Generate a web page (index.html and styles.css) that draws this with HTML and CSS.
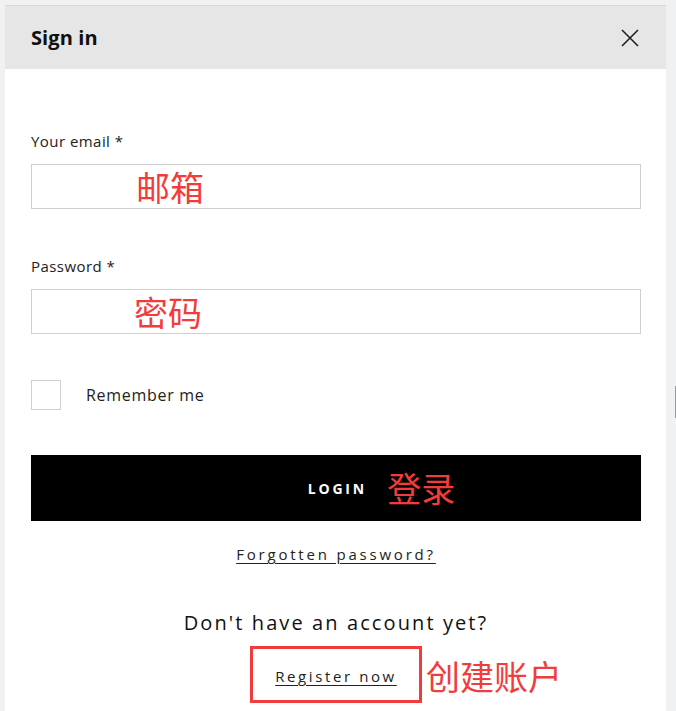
FILE: index.html
```html
<!DOCTYPE html>
<html lang="en">
<head>
<meta charset="utf-8">
<title>Sign in</title>
<link rel="stylesheet" href="styles.css">
</head>
<body>
<div class="modal">
  <div class="header">
    <h1 class="title">Sign in</h1>
    <button class="close" aria-label="Close">
      <svg width="18" height="18" viewBox="0 0 18 18"><path d="M1 1 L17 17 M17 1 L1 17" stroke="#1a1a1a" stroke-width="1.5" fill="none"/></svg>
    </button>
  </div>
  <div class="body">
    <label class="label first">Your email *</label>
    <div class="input"><span class="note">邮箱</span></div>
    <label class="label">Password *</label>
    <div class="input"><span class="note pw">密码</span></div>
    <div class="remember">
      <span class="checkbox"></span>
      <span class="remember-text">Remember me</span>
    </div>
    <div class="login">
      <span></span>
      <span class="login-text">LOGIN</span>
      <span class="note login-note">登录</span>
    </div>
    <div class="center"><a class="link forgot">Forgotten password?</a></div>
    <div class="center question">Don't have an account yet?</div>
    <div class="register-row">
      <span></span>
      <span class="register-box"><a class="link">Register now</a></span>
      <span class="note reg-note">创建账户</span>
    </div>
  </div>
</div>
<div class="scroll-mark"></div>
</body>
</html>
```
FILE: styles.css
```css
html, body {
  margin: 0;
  padding: 0;
  background: #f0f1f2;
  height: 711px;
  overflow: hidden;
}
body {
  font-family: "Open Sans", "Noto Sans CJK SC", sans-serif;
  color: #222;
  padding-top: 5px;
}
.modal {
  margin-left: 5px;
  width: 661px;
  height: 706px;
  background: #fff;
  border-top: 1px solid #dadada;
  box-sizing: border-box;
}
.header {
  height: 63px;
  background: #e6e6e6;
  display: flex;
  align-items: center;
  justify-content: space-between;
  padding: 0 27px 0 26px;
}
.title {
  margin: 0;
  font-size: 20px;
  font-weight: 700;
  color: #111;
  letter-spacing: 0.1px;
  line-height: 26px;
  padding-top: 1px;
}
.close {
  border: 0;
  background: none;
  padding: 0;
  width: 18px;
  height: 18px;
  display: block;
  cursor: pointer;
  margin-top: 1px;
}
.close svg { display: block; }
.body {
  padding: 0 25px 0 26px;
  display: flex;
  flex-direction: column;
}
.label {
  display: block;
  font-size: 15px;
  line-height: 20px;
  letter-spacing: 0.45px;
  color: #222;
  margin-top: 47px;
  margin-bottom: 13px;
}
.label.first { margin-top: 62px; }
.input {
  height: 45px;
  border: 1px solid #cfcfcf;
  box-sizing: border-box;
  display: flex;
  align-items: center;
  padding-left: 104px;
}
.note {
  font-family: "Noto Sans CJK SC", sans-serif;
  color: #f23c3c;
  font-size: 34px;
  line-height: 40px;
}
.note.pw { margin-left: -2px; }
.remember {
  display: flex;
  align-items: center;
  margin-top: 46px;
  height: 30px;
}
.checkbox {
  width: 30px;
  height: 30px;
  border: 1px solid #d0d0d0;
  box-sizing: border-box;
}
.remember-text {
  margin-left: 25px;
  font-size: 16px;
  letter-spacing: 0.7px;
  color: #222;
}
.login {
  margin-top: 45px;
  height: 66px;
  background: #000;
  display: grid;
  grid-template-columns: 1fr auto 1fr;
  align-items: center;
}
.login-text {
  color: #fff;
  font-weight: 700;
  font-size: 14px;
  letter-spacing: 2.8px;
  margin-right: -2.8px;
}
.login-note {
  margin-left: 23px;
  font-size: 34px;
}
.center {
  text-align: center;
}
.link {
  color: #222;
  text-decoration: underline;
  text-underline-offset: 3px;
  font-size: 15px;
  letter-spacing: 2.6px;
  cursor: pointer;
}
.forgot {
  display: inline-block;
  margin-top: 23px;
  line-height: 20px;
  letter-spacing: 2.8px;
}
.question {
  margin-top: 45px;
  font-size: 20px;
  line-height: 26px;
  letter-spacing: 2.1px;
  color: #111;
}
.register-row {
  margin-top: 10px;
  display: grid;
  grid-template-columns: 1fr auto 1fr;
  align-items: center;
}
.register-box {
  border: 3px solid #f23c3c;
  box-sizing: border-box;
  height: 57px;
  width: 172px;
  display: flex;
  align-items: center;
  justify-content: center;
  padding-top: 2px;
}
.reg-note {
  margin-left: 4px;
  font-size: 34px;
  margin-top: 2px;
}
.scroll-mark {
  position: absolute;
  left: 675px;
  top: 386px;
  width: 1px;
  height: 32px;
  background: #9a9a9a;
}
```
